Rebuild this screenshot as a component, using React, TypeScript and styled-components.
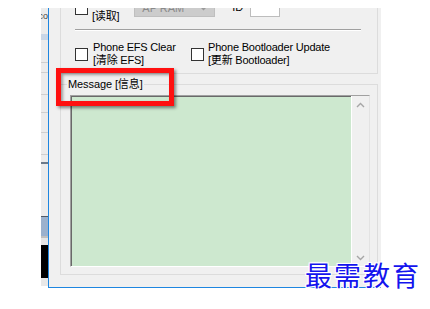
import React, { FC } from 'react';
import styled, { createGlobalStyle } from 'styled-components';

const GlobalStyle = createGlobalStyle`
  html, body {
    margin: 0;
    padding: 0;
    background: #fff;
  }
  body {
    width: 430px;
    height: 309px;
    overflow: hidden;
    font-family: "Liberation Sans", "Noto Sans CJK SC", sans-serif;
    font-size: 11px;
    color: #000;
  }
`;

const Stage = styled.div`
  position: relative;
  width: 430px;
  height: 309px;
  padding-top: 8px;
  box-sizing: border-box;
  display: flex;
  align-items: flex-start;
`;

// strip of the window lying behind, seen at the left edge
const BehindStrip = styled.div`
  margin-left: 41px;
  width: 7px;
  height: 280px;
  display: flex;
  flex-direction: column;
  overflow: hidden;
`;

const Band = styled.div<{ $h: number; $bg: string }>`
  flex: 0 0 ${(p) => p.$h}px;
  background: ${(p) => p.$bg};
`;

const BandText = styled.div`
  flex: 0 0 16px;
  background: #ececec;
  display: flex;
  justify-content: flex-end;
  align-items: center;
  font-size: 9px;
  color: #444;
  white-space: nowrap;
  overflow: hidden;
`;

const Window = styled.div`
  position: relative;
  width: 333px;
  box-sizing: border-box;
  background: #f0f0f0;
  border-left: 1px solid #1e86e0;
  border-bottom: 1px solid #1e86e0;
  padding: 0 3px 12px 11px;
  display: flex;
  flex-direction: column;
`;

const OptionsGroup = styled.div`
  border: 1px solid #dcdcdc;
  border-top: none;
  padding: 0 0 6px 14px;
`;

const TopRow = styled.div`
  height: 15px;
  overflow: hidden;
  display: flex;
  align-items: flex-end;
`;

const CheckBox = styled.span<{ $drop?: number }>`
  flex: 0 0 13px;
  height: 13px;
  box-sizing: border-box;
  border: 1px solid #333;
  background: #fff;
  margin-bottom: ${(p) => p.$drop ?? 0}px;
`;

const Label = styled.div<{ $gap?: number }>`
  margin-left: ${(p) => p.$gap ?? 5}px;
  line-height: 13px;
  letter-spacing: -0.2px;
  white-space: nowrap;
`;

const Combo = styled.div`
  margin-left: 15px;
  margin-bottom: 6px;
  width: 81px;
  height: 18px;
  box-sizing: border-box;
  background: #cccccc;
  border: 1px solid #bfbfbf;
  color: #8a8a8a;
  display: flex;
  align-items: center;
  justify-content: space-between;
  padding: 0 6px 0 7px;
`;

const FieldName = styled.span`
  margin-left: 17px;
  margin-bottom: 9px;
  line-height: 13px;
`;

const SmallInput = styled.div`
  margin-left: 7px;
  margin-bottom: 6px;
  width: 30px;
  height: 18px;
  box-sizing: border-box;
  background: #fff;
  border: 1px solid #bdbdbd;
`;

const Separator = styled.div`
  margin: 6px 16px 0 0;
  border-top: 1px solid #a0a0a0;
  border-bottom: 1px solid #fff;
`;

const CheckRow = styled.div`
  margin-top: 10px;
  display: flex;
  align-items: center;
`;

const Option = styled.div<{ $w?: number }>`
  display: flex;
  align-items: center;
  ${(p) => (p.$w ? `flex: 0 0 ${p.$w}px;` : '')}
`;

const MessageGroup = styled.fieldset`
  margin: 3px 0 0 0;
  border: 1px solid #dcdcdc;
  padding: 4px 7px 7px 9px;
  min-width: 0;
`;

const Legend = styled.legend`
  margin-left: -3px;
  padding: 0 1px;
  line-height: 14px;
  font-size: 11px;
  letter-spacing: -0.1px;
`;

const TextFrame = styled.div`
  height: 172px;
  box-sizing: border-box;
  display: flex;
  border-top: 1px solid #a0a0a0;
  border-left: 1px solid #a0a0a0;
  border-right: 1px solid #e3e3e3;
  border-bottom: 1px solid #fff;
  box-shadow: inset 1px 1px 0 #696969;
`;

const Console = styled.div`
  flex: 1;
  margin: 1px 0 0 1px;
  background: #cde8cf;
`;

const ScrollBar = styled.div`
  flex: 0 0 17px;
  border-left: 1px solid #fff;
  background: #f0f0f0;
  display: flex;
  flex-direction: column;
  justify-content: space-between;
`;

const ScrollButton = styled.div`
  height: 17px;
  display: flex;
  align-items: center;
  justify-content: center;
`;

const Highlight = styled.div`
  position: absolute;
  left: 56px;
  top: 68px;
  width: 118px;
  height: 38px;
  box-sizing: border-box;
  border: 5px solid #ff1010;
  box-shadow: 2px 2px 3px rgba(0, 0, 0, 0.45), inset 2px 2px 3px rgba(0, 0, 0, 0.35);
`;

const Watermark = styled.div`
  position: absolute;
  left: 305px;
  top: 259px;
  font-family: "Noto Sans CJK SC", sans-serif;
  font-size: 27px;
  line-height: 32px;
  letter-spacing: 2px;
  color: #1414ee;
  text-shadow: 1px 1px 0 #fff, -1px -1px 0 #fff, 1px -1px 0 #fff, -1px 1px 0 #fff, 0 0 3px #fff;
`;

const Chevron: FC<{ down?: boolean; color?: string }> = ({ down, color = '#a6a6a6' }) => (
  <svg width="9" height="6" viewBox="0 0 9 6">
    <polyline
      points={down ? '1,1 4.5,4.5 8,1' : '1,5 4.5,1.5 8,5'}
      fill="none"
      stroke={color}
      strokeWidth="1.4"
    />
  </svg>
);

const App: FC = () => {
  return (
    <Stage>
      <GlobalStyle />
      <BehindStrip>
        <BandText>eco</BandText>
        <Band $h={10} $bg="#ececec" />
        <Band $h={6} $bg="#c9d6e6" />
        <Band $h={22} $bg="#ececec" />
        <Band $h={1} $bg="#cfcfcf" />
        <Band $h={9} $bg="#ececec" />
        <Band $h={1} $bg="#cfcfcf" />
        <Band $h={21} $bg="#ececec" />
        <Band $h={1} $bg="#cfcfcf" />
        <Band $h={17} $bg="#ececec" />
        <Band $h={1} $bg="#cfcfcf" />
        <Band $h={19} $bg="#ececec" />
        <Band $h={1} $bg="#cfcfcf" />
        <Band $h={21} $bg="#ececec" />
        <Band $h={1} $bg="#cfcfcf" />
        <Band $h={7} $bg="#ececec" />
        <Band $h={2} $bg="#6c7a8a" />
        <Band $h={52} $bg="#ececec" />
        <Band $h={1} $bg="#505a66" />
        <Band $h={19} $bg="#9bb1cd" />
        <Band $h={2} $bg="#c0c0c0" />
        <Band $h={7} $bg="#e6e6e6" />
        <Band $h={33} $bg="#000" />
        <Band $h={8} $bg="#e8e8e8" />
      </BehindStrip>

      <Window>
        <OptionsGroup>
          <TopRow>
            <CheckBox $drop={8} />
            <Label $gap={4}>[读取]</Label>
            <Combo>
              <span>AP RAM</span>
              <Chevron down color="#9a9a9a" />
            </Combo>
            <FieldName>ID</FieldName>
            <SmallInput />
          </TopRow>
          <Separator />
          <CheckRow>
            <Option $w={116}>
              <CheckBox />
              <Label>
                Phone EFS Clear
                <br />
                [清除 EFS]
              </Label>
            </Option>
            <Option>
              <CheckBox />
              <Label $gap={4}>
                Phone Bootloader Update
                <br />
                [更新 Bootloader]
              </Label>
            </Option>
          </CheckRow>
        </OptionsGroup>

        <MessageGroup>
          <Legend>Message [信息]</Legend>
          <TextFrame>
            <Console />
            <ScrollBar>
              <ScrollButton>
                <Chevron />
              </ScrollButton>
              <ScrollButton>
                <Chevron down />
              </ScrollButton>
            </ScrollBar>
          </TextFrame>
        </MessageGroup>
      </Window>

      <Highlight />
      <Watermark>最需教育</Watermark>
    </Stage>
  );
};

export default App;
